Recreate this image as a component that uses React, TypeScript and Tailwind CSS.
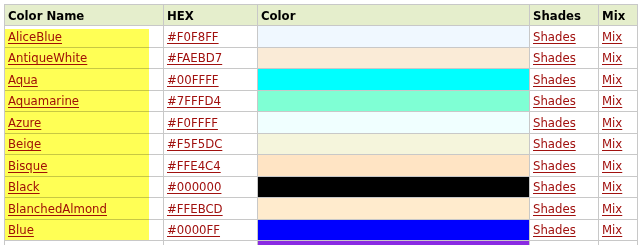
import React from "react";

const colors: [string, string][] = [
  ["AliceBlue", "#F0F8FF"],
  ["AntiqueWhite", "#FAEBD7"],
  ["Aqua", "#00FFFF"],
  ["Aquamarine", "#7FFFD4"],
  ["Azure", "#F0FFFF"],
  ["Beige", "#F5F5DC"],
  ["Bisque", "#FFE4C4"],
  ["Black", "#000000"],
  ["BlanchedAlmond", "#FFEBCD"],
  ["Blue", "#0000FF"],
];

const link = "text-[#a0100e] underline underline-offset-2";
const cell = "border border-[#c8c8c8] px-[3px] h-[21.5px] p-0 leading-none";

export default function App() {
  return (
    <div
      className="relative bg-white h-[245px] overflow-hidden pt-[4px] pl-[4px] text-[13px] text-black"
      style={{ fontFamily: '"DejaVu Sans Condensed", "DejaVu Sans", Verdana, sans-serif' }}
    >
      <table className="border-collapse w-[633px] table-fixed">
        <colgroup>
          <col className="w-[159px]" />
          <col className="w-[94px]" />
          <col className="w-[272px]" />
          <col className="w-[69px]" />
          <col className="w-[39px]" />
        </colgroup>
        <thead>
          <tr className="bg-[#e5eecc] text-left font-bold">
            <th className={`${cell} h-[21px]`}>Color Name</th>
            <th className={`${cell} h-[21px]`}>HEX</th>
            <th className={`${cell} h-[21px]`}>Color</th>
            <th className={`${cell} h-[21px]`}>Shades</th>
            <th className={`${cell} h-[21px]`}>Mix</th>
          </tr>
        </thead>
        <tbody>
          {colors.map(([name, hex]) => (
            <tr key={name}>
              <td className={cell}>
                <a className={link}>{name}</a>
              </td>
              <td className={cell}>
                <a className={link}>{hex}</a>
              </td>
              <td className={cell} style={{ backgroundColor: hex }} />
              <td className={cell}>
                <a className={link}>Shades</a>
              </td>
              <td className={cell}>
                <a className={link}>Mix</a>
              </td>
            </tr>
          ))}
          {/* next row, only its top edge is in view */}
          <tr>
            <td className={cell} />
            <td className={cell} />
            <td className={`${cell} bg-[#8a2be2]`} />
            <td className={cell} />
            <td className={cell} />
          </tr>
        </tbody>
      </table>
      {/* highlighter mark over the name column */}
      <div className="absolute left-[5px] top-[29px] w-[144px] h-[211px] bg-[#ffff55] mix-blend-multiply pointer-events-none" />
    </div>
  );
}
